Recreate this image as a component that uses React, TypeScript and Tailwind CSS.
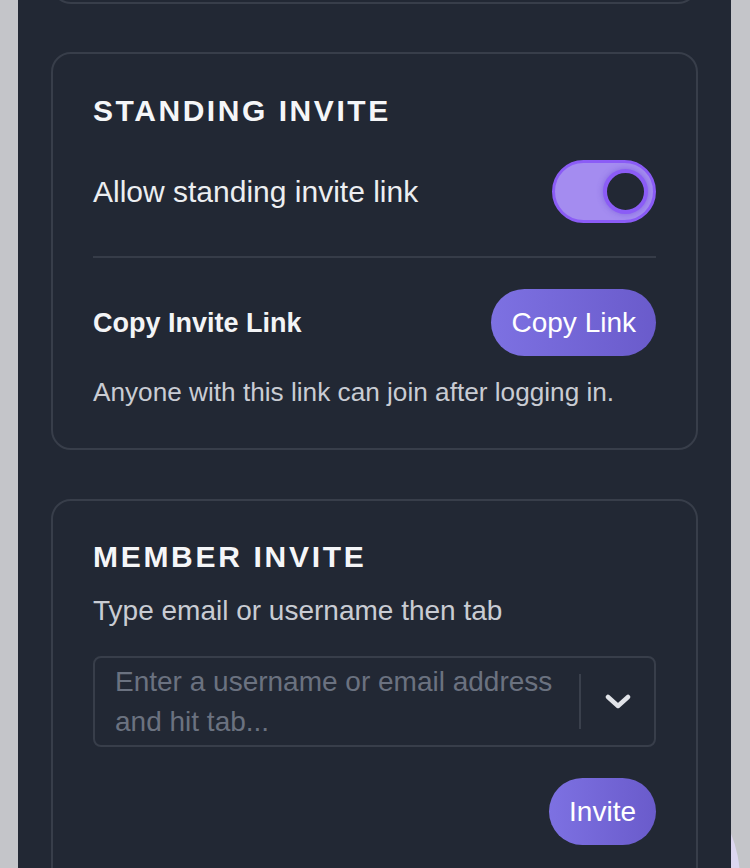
import React, { useState } from 'react';

function Toggle({ on, onChange }: { on: boolean; onChange: () => void }) {
  return (
    <button
      onClick={onChange}
      className={`w-[104px] h-[63px] rounded-full border-[3px] flex items-center px-[5px] ${
        on ? 'bg-[#a48cf0] border-[#8b5cf6] justify-end' : 'bg-[#3a404b] border-[#4b5261] justify-start'
      }`}
    >
      <span className="w-[45px] h-[45px] rounded-full bg-[#222834] border-[4px] border-[#8b5cf6] shadow-[0_0_6px_rgba(91,60,200,0.45)]" />
    </button>
  );
}

function PillButton({ children }: { children: React.ReactNode }) {
  return (
    <button className="h-[67px] px-[20px] rounded-full bg-linear-to-r from-[#7d71e2] to-[#6a5bcb] text-white text-[28px] leading-none">
      {children}
    </button>
  );
}

export default function App() {
  const [standing, setStanding] = useState(true);

  return (
    <div
      className="relative w-[750px] h-[868px] overflow-hidden bg-[#c4c5c9]"
      style={{ fontFamily: '"Liberation Sans", Arial, sans-serif' }}
    >
      {/* something peeking out behind the panel */}
      <div className="absolute left-[490px] top-[755px] w-[250px] h-[250px] rounded-full bg-[#dcd6ef]" />

      <div className="relative z-10 ml-[18px] w-[713px] h-full flow-root bg-[#222834] px-[33px]">
        {/* tail of the previous card */}
        <div className="-mt-[100px] h-[104px] rounded-[20px] border-2 border-[#383e4a]" />

        {/* Standing invite */}
        <section className="mt-[48px] rounded-[20px] border-2 border-[#383e4a] px-[40px] pt-[39px] pb-[38px]">
          <h2 className="text-[30px] leading-[36px] font-bold tracking-[0.085em] text-[#f5f6f8]">STANDING INVITE</h2>
          <div className="mt-[31px] flex items-center justify-between">
            <span className="text-[30px] leading-[36px] text-[#eceef1]">Allow standing invite link</span>
            <Toggle on={standing} onChange={() => setStanding(!standing)} />
          </div>
          <div className="mt-[33px] h-[2px] bg-[#363c48]" />
          <div className="mt-[31px] flex items-center justify-between">
            <span className="text-[27px] leading-[36px] font-bold text-[#f3f4f6]">Copy Invite Link</span>
            <PillButton>Copy Link</PillButton>
          </div>
          <p className="mt-[18px] text-[26.2px] leading-[36px] text-[#c9ccd3]">
            Anyone with this link can join after logging in.
          </p>
        </section>

        {/* Member invite */}
        <section className="mt-[49px] rounded-[20px] border-2 border-[#383e4a] px-[40px] pt-[38px] pb-[40px]">
          <h2 className="text-[30px] leading-[36px] font-bold tracking-[0.09em] text-[#f5f6f8]">MEMBER INVITE</h2>
          <p className="mt-[18px] text-[28px] leading-[36px] text-[#c9ccd3]">Type email or username then tab</p>
          <div className="mt-[27px] h-[91px] rounded-[8px] border-2 border-[#383e4a] flex items-center">
            <div className="flex-1 pl-[20px] pr-[16px] text-[28px] leading-[40px] text-[#6b7280]">
              Enter a username or email address and hit tab...
            </div>
            <div className="w-[2px] h-[55px] bg-[#3a404c]" />
            <div className="w-[73px] flex items-center justify-center">
              <svg width="26" height="16" viewBox="0 0 26 16" fill="none">
                <path d="M3 3l10 9 10-9" stroke="#e1e3e8" strokeWidth="4.5" strokeLinecap="round" strokeLinejoin="round" />
              </svg>
            </div>
          </div>
          <div className="mt-[31px] flex justify-end">
            <PillButton>Invite</PillButton>
          </div>
        </section>
      </div>
    </div>
  );
}
